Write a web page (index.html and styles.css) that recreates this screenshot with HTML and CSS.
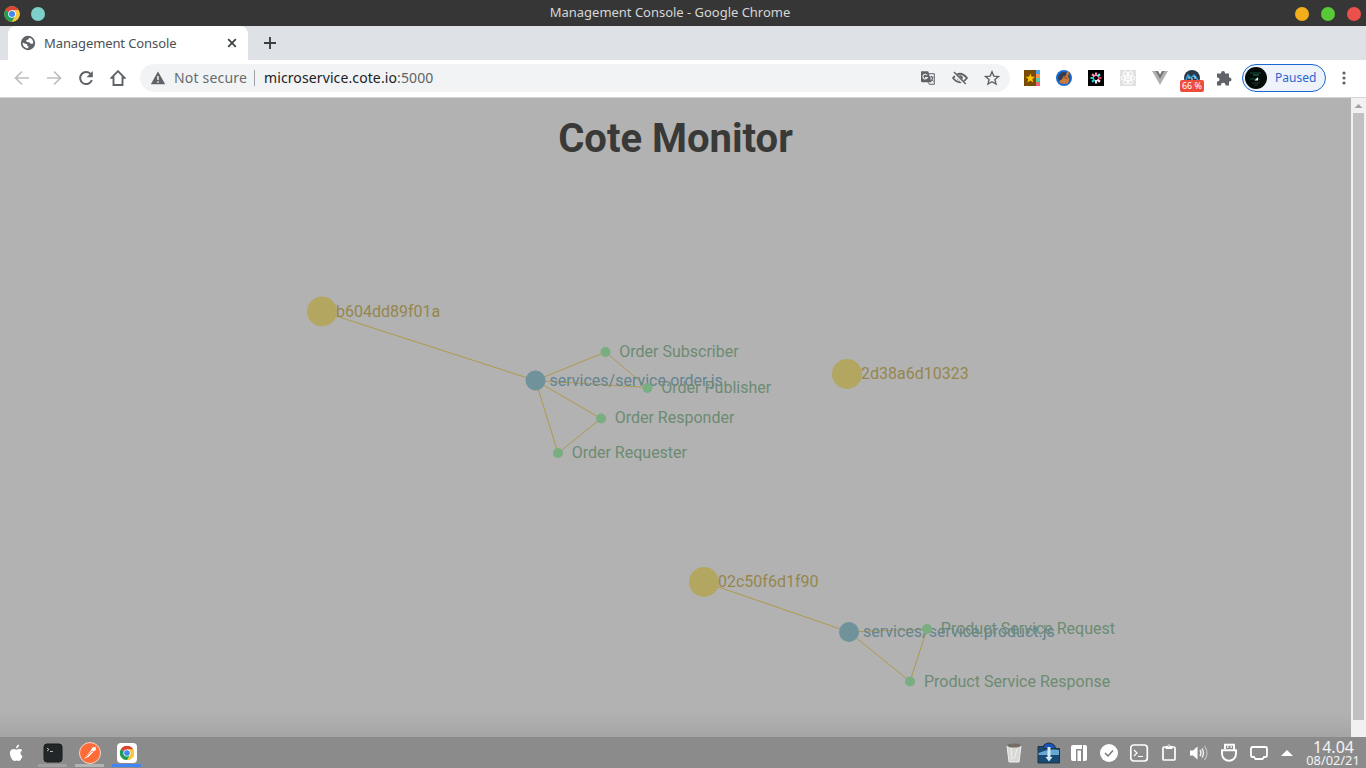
FILE: index.html
```html
<!DOCTYPE html>
<html lang="en">
<head>
<meta charset="utf-8">
<title>Management Console</title>
<link rel="stylesheet" href="styles.css">
</head>
<body>
<svg width="0" height="0" class="defs">
  <symbol id="chrome" viewBox="0 0 48 48">
    <circle cx="24" cy="24" r="23" fill="#fbc83c"/>
    <path d="M24 24L4 12.500A23 23 0 0 1 44 12.500H24z" fill="#db4437"/>
    <path d="M4 12.500A23 23 0 0 0 24 47L34 30L24 24z" fill="#1f9d58"/>
    <path d="M24 12.500H44A23 23 0 0 1 24 47L34 30z" fill="#fbc83c"/>
    <circle cx="24" cy="24" r="11.500" fill="#fff"/>
    <circle cx="24" cy="24" r="9" fill="#4285f4"/>
  </symbol>
</svg>

<header class="titlebar">
  <div class="title-left"><svg width="16" height="16"><use href="#chrome"/></svg><i class="dot teal"></i></div>
  <span class="window-title">Management Console - Google Chrome</span>
  <div class="title-right"><i class="dot amber"></i><i class="dot green"></i><i class="dot red"></i></div>
</header>

<nav class="tabstrip">
  <div class="tab">
    <svg class="favicon" width="16" height="16" viewBox="0 0 16 16"><circle cx="8" cy="8" r="7.200" fill="#5f6368"/><path d="M9.300 2.700L8.200 4.600L6.200 5.200L6.600 7.100L9.400 7.300L10.500 8.800L13.200 8.400A5.500 5.500 0 0 0 9.300 2.700zM2.600 7.500L5.300 8.800L7.200 9.300L7.300 11L8.800 11.600L7.600 13.500A5.600 5.600 0 0 1 2.600 7.500z" fill="#fff"/></svg>
    <span class="tab-title">Management Console</span>
    <svg class="close" width="16" height="16" viewBox="0 0 16 16"><path d="M4.200 4.200l7.600 7.600M11.800 4.200l-7.600 7.600" stroke="#3c4043" stroke-width="1.700"/></svg>
  </div>
  <svg class="newtab" width="16" height="16" viewBox="0 0 16 16"><path d="M8 2v12M2 8h12" stroke="#3c4043" stroke-width="1.900"/></svg>
</nav>

<div class="toolbar">
  <div class="nav-buttons">
    <svg viewBox="0 0 16 16"><path d="M15 8H2M8 1.500L1.500 8L8 14.500" fill="none" stroke="#bbbdc0" stroke-width="1.700"/></svg>
    <svg viewBox="0 0 16 16"><path d="M1 8h13M8 1.500L14.500 8L8 14.500" fill="none" stroke="#bbbdc0" stroke-width="1.700"/></svg>
    <svg viewBox="0 0 16 16"><path d="M13 4.600A6 6 0 1 0 13.800 10" fill="none" stroke="#5f6368" stroke-width="2"/><path d="M14.800 1v6.300H8.500z" fill="#5f6368"/></svg>
    <svg viewBox="0 0 16 16"><path d="M8 1.200L1.500 7.800H3.500V15H12.500V7.800H14.500z" fill="none" stroke="#5f6368" stroke-width="1.900"/></svg>
  </div>
  <div class="omnibox">
    <svg width="16" height="16" viewBox="0 0 16 16"><path d="M8 1.500L15.200 14.300H.8z" fill="#5f6368"/><path d="M8 6v4M8 11.200v1.600" stroke="#f1f3f4" stroke-width="1.500"/></svg>
    <span class="insecure">Not secure</span><i class="divider"></i><span class="url">microservice.cote.io<span class="port">:5000</span></span>
    <div class="omni-icons">
      <svg viewBox="0 0 16 16"><path d="M1 1.200h7.200l3.300 11H2.200Q1 12.200 1 11z" fill="#5f6368"/><path d="M8.500 3.700h5.800v10.600H9.400L8 12.200" fill="none" stroke="#5f6368" stroke-width="1"/><path d="M7.100 5.300A2.300 2.300 0 1 0 7.300 7.500H5" fill="none" stroke="#f1f3f4" stroke-width="1.100"/><path d="M10 7h3.500M11.500 6v1M13 7q-.6 3-2 4.500M11 8.500l2.500 3" stroke="#5f6368" fill="none"/></svg>
      <svg viewBox="0 0 16 16"><path d="M1 8Q8-.5 15 8Q8 16.500 1 8z" fill="none" stroke="#5f6368" stroke-width="1.800"/><circle cx="8" cy="8" r="2.800" fill="#5f6368"/><path d="M1.600 2.800l11.600 11.700" stroke="#f1f3f4" stroke-width="3"/><path d="M2 2l11.800 12" stroke="#5f6368" stroke-width="1.500"/></svg>
      <svg viewBox="0 0 16 16"><path d="M8 1.800l1.800 4.300 4.700.4-3.600 3 1.100 4.600L8 11.700 4 14.100l1.100-4.600-3.600-3 4.700-.4z" fill="none" stroke="#5f6368" stroke-width="1.400"/></svg>
    </div>
  </div>
  <div class="extensions">
    <svg viewBox="0 0 16 16"><path d="M0 0h12v16H0z" fill="#794b05"/><path d="M12 0h4v4h-4z" fill="#4ba2eb"/><path d="M12 4h4v4h-4z" fill="#f98f55"/><path d="M12 8h4v4h-4z" fill="#4acca4"/><path d="M12 12h4v4h-4z" fill="#ed6573"/><path d="M6.300 3.500l1.200 3.200 3.600.1-2.800 2.200 1 3.400-3-2-3 2 1-3.400L1.500 6.800l3.600-.1z" fill="#ffc800"/></svg>
    <svg viewBox="0 0 16 16"><circle cx="8" cy="8" r="8" fill="#176bd2"/><circle cx="8" cy="8" r="6" fill="#343d4e"/><path d="M11.500 1l2 1-1.500 4.500 1.500 2-1.500 5Q5 15 3 11.300L6.200 9l1.200-3 2 .2z" fill="#c77a3c"/><path d="M7.200 7l4.500 1.500" stroke="#8a4d22"/></svg>
    <svg viewBox="0 0 16 16"><path d="M0 0h16v16H0z" fill="#000"/><g stroke-width="2.200"><path d="M8 2.500v3.500M4.100 4.100l2.500 2.500" stroke="#ff8dad"/><path d="M2.500 8H6M4.100 11.900l2.500-2.500" stroke="#25c9cf"/><path d="M8 13.500V10M11.900 11.900L9.400 9.400" stroke="#f3e7ef"/><path d="M13.500 8H10" stroke="#e83363"/><path d="M11.900 4.100L9.400 6.600" stroke="#63edf1"/></g></svg>
    <svg viewBox="0 0 16 16"><path d="M0 0h16v16H0z" fill="#e1e1e1"/><g fill="none" stroke="#fff" stroke-width="1"><ellipse cx="8" cy="8" rx="7" ry="2.600"/><ellipse cx="8" cy="8" rx="7" ry="2.600" transform="rotate(60 8 8)"/><ellipse cx="8" cy="8" rx="7" ry="2.600" transform="rotate(120 8 8)"/></g><circle cx="8" cy="8" r="1.400" fill="#fff"/></svg>
    <svg viewBox="0 0 16 16"><path d="M0 1h4l4 7 4-7h4L8 15z" fill="#b1b1b1"/><path d="M3.500 1H6l2 3.500L10 1h2.500L8 9z" fill="#777"/></svg>
    <div class="badged"><svg viewBox="0 0 16 16"><circle cx="8" cy="8" r="8" fill="#2b3a4b"/><path d="M2 10l2-5 3 3 3-3 4 5" stroke="#37a7e4" fill="none" stroke-width="1.400"/><path d="M5 7v2M11 6v3M8 8v2" stroke="#e8edf1" stroke-width="1"/></svg><span class="badge">66 %</span></div>
    <svg viewBox="0 0 16 16"><path d="M1 3.500h4V3a2 2 0 0 1 4 0v.500h4v4h.500a2 2 0 0 1 0 4H13v4H9.500V15a2 2 0 0 0-4.500 0v.500H1V11.500h.500a2 2 0 0 0 0-4H1z" fill="#5f6368"/></svg>
  </div>
  <div class="profile"><svg width="22" height="22" viewBox="0 0 22 22"><circle cx="11" cy="11" r="11" fill="#020b08"/><path d="M5 6h11M5 12h10" stroke="#0c3b29" stroke-width="1.500"/><path d="M8 8h6" stroke="#26795a"/><path d="M9.500 13.500l3.500-3.500v3.500z" fill="#eef"/><path d="M7 16h8M9 18h4" stroke="#26382f"/></svg><span>Paused</span></div>
  <svg class="menu" width="16" height="16" viewBox="0 0 16 16"><g fill="#5f6368"><circle cx="8" cy="3" r="1.600"/><circle cx="8" cy="8" r="1.600"/><circle cx="8" cy="13" r="1.600"/></g></svg>
</div>

<div class="viewport">
  <main class="page">
    <h1>Cote Monitor</h1>
    <svg class="graph" viewBox="0 98 1351 639">
      <g class="links">
        <path d="M322 311.500L535.500 380.500L605.500 352L647.500 387.500L535.500 380.500L601 418.500L558 453L535.500 380.500"/>
        <path d="M704 582L849 632L927 629L910 681.500L849 632"/>
      </g>
      <g class="host"><circle cx="322" cy="311.500" r="15"/><text x="336" y="317">b604dd89f01a</text><circle cx="847" cy="374" r="15"/><text x="861" y="379">2d38a6d10323</text><circle cx="704" cy="582" r="15"/><text x="718" y="587">02c50f6d1f90</text></g>
      <g class="process"><circle cx="535.500" cy="380.500" r="10"/><text x="549.500" y="386">services/service.order.js</text><circle cx="849" cy="632" r="10"/><text x="863" y="637">services/service.product.js</text></g>
      <g class="service">
        <circle cx="605.500" cy="352" r="5"/><text x="619.300" y="357">Order Subscriber</text>
        <circle cx="647.500" cy="388" r="5"/><text x="661.300" y="393">Order Publisher</text>
        <circle cx="601" cy="418.500" r="5"/><text x="614.700" y="423">Order Responder</text>
        <circle cx="558" cy="453" r="5"/><text x="571.700" y="458">Order Requester</text>
        <circle cx="927" cy="629" r="5"/><text x="940.800" y="634">Product Service Request</text>
        <circle cx="910" cy="681.500" r="5"/><text x="924" y="687">Product Service Response</text>
      </g>
    </svg>
  </main>
  <aside class="scrollbar"><svg width="15" height="15" viewBox="0 0 15 15"><path d="M3.500 10L7.500 6l4 4z" fill="#a3a3a3"/></svg><i class="thumb"></i></aside>
</div>

<footer class="taskbar">
  <div class="apps">
    <div class="app"><svg width="20" height="24" viewBox="0 0 20 24"><path d="M10.500 8.700Q12.500 7.500 14.400 8.100Q15.700 8.400 16.200 9.400Q12.500 12 16.500 15.300Q14.700 20 12.800 20Q10.500 19 8.500 20Q6.700 20.300 5 16.500Q2.500 10 5.800 8.500Q7.800 7.400 10.500 8.700zM10 7.500Q10 4.500 13 3.600Q13.200 6.500 10 7.500z" fill="#fff"/></svg></div>
    <div class="app running first"><svg width="20" height="20" viewBox="0 0 20 20"><rect x="1" y="1" width="18" height="18" rx="3" fill="#222628" stroke="#171a1b"/><path d="M4 5l2 1.500L4 8M7 8.500h3" stroke="#ddd" fill="none" stroke-width=".8"/></svg></div>
    <div class="app running"><svg width="24" height="24" viewBox="0 0 24 24"><circle cx="12" cy="12" r="10.500" fill="#ff6c37" stroke="#f2d5ca" stroke-width="1"/><path d="M6 18l6.500-8 2-3.500 3-.8.500 3-2.500 2-5 5z" fill="#fff"/><path d="M8 16l6-6 2 1" stroke="#ff6c37" stroke-width=".7" fill="none"/></svg></div>
    <div class="app running active"><svg width="20" height="20" viewBox="0 0 20 20"><rect width="20" height="20" rx="4" fill="#fff"/><svg x="2.500" y="2.500" width="15" height="15"><use href="#chrome"/></svg></svg></div>
  </div>
  <div class="tray">
    <svg class="wide" viewBox="0 0 24 24"><path d="M5 4h14l-2 17H7z" fill="#d8d8d5"/><ellipse cx="12" cy="4.500" rx="7" ry="2" fill="#6b7069"/><path d="M5 5l2 16h10l2-16M9 7l1 12M15 8l-3 10" stroke="#f0f0ed" fill="none"/><path d="M9 4h2M14 5h2" stroke="#b45b46"/></svg>
    <svg class="wide folder" viewBox="0 0 24 24"><circle cx="13" cy="9" r="7" fill="#1954bc" stroke="#222e3d"/><path d="M2 5.500h5l1 2h15.500v14.500H2z" fill="#174a75" stroke="#26323c"/><path d="M2.500 12q10-5 20.500-3v5H2.500z" fill="#67a9d2"/><path d="M11.500 6h3v10h2l-3.500 4.500L9.500 16h2z" fill="#d4ebf6"/></svg>
    <svg viewBox="0 0 20 20"><path d="M4 2h9v4H7v12H4Q2 18 2 16V4Q2 2 4 2zM8.500 7.500H12V18H8.500zM14 2h2q2 0 2 2v12q0 2-2 2h-2z" fill="#fff"/></svg>
    <svg viewBox="0 0 20 20"><circle cx="10" cy="10" r="9" fill="#fff"/><path d="M6 10l3 3 5-5.500" fill="none" stroke="#777" stroke-width="1.500"/></svg>
    <svg viewBox="0 0 20 20"><rect x="1.800" y="2" width="16.500" height="16" rx="3" fill="none" stroke="#fff" stroke-width="1.700"/><path d="M5 7l3 3-3 3M9 13.500h5" fill="none" stroke="#fff" stroke-width="1.200"/></svg>
    <svg viewBox="0 0 20 20"><path d="M7 4H5Q4 4 4 5v11q0 1 1 1h10q1 0 1-1V5q0-1-1-1h-2" fill="none" stroke="#fff" stroke-width="1.700"/><path d="M6.500 3h2a1.500 1.500 0 0 1 3 0h2v3h-7z" fill="#fff"/><circle cx="10" cy="3" r=".8" fill="#888"/></svg>
    <svg viewBox="0 0 20 20"><path d="M1 7.500h3l4.500-4v13l-4.500-4H1z" fill="#fff"/><path d="M11 7q2 3 0 6M13 5.500q3 4.500 0 9" fill="none" stroke="#eee" stroke-width="1.400"/><path d="M15.500 3q5 7 0 14" fill="none" stroke="#bdbdbd" stroke-width="1.300"/></svg>
    <svg viewBox="0 0 20 20"><path d="M6 6V1.800h9V7M3 7.300h14v3.500a7 7 0 0 1-14 0z" fill="none" stroke="#fff" stroke-width="1.900"/><path d="M8 4h1.500M11.500 4H13" stroke="#fff" stroke-width="1.500"/></svg>
    <svg viewBox="0 0 20 20"><path d="M3.500 4h13q1.500 0 1.500 1.500v7q0 1.500-1.500 1.500H15l-1.500 2h-7L5 14H3.500Q2 14 2 12.500v-7Q2 4 3.500 4z" fill="none" stroke="#fff" stroke-width="1.800"/></svg>
    <svg class="arrow" viewBox="0 0 20 20"><path d="M4 13l6-6 6 6z" fill="#fff"/></svg>
  </div>
  <div class="clock"><span class="time">14.04</span><span class="date">08/02/21</span></div>
</footer>
</body>
</html>
```

FILE: styles.css
```css
* { box-sizing: border-box; }
body { margin: 0; width: 1366px; height: 768px; overflow: hidden; display: flex; flex-direction: column; font-family: "Noto Sans", sans-serif; }
svg { display: block; flex: none; }
.defs { display: none; }
.titlebar { height: 26px; background: #363636; display: grid; grid-template-columns: 120px 1fr 120px; align-items: center; flex: none; }
.title-left, .title-right { display: flex; align-items: center; padding-top: 2px; }
.title-left { padding-left: 4px; gap: 11px; }
.title-right { justify-content: flex-end; padding-right: 5px; gap: 12px; }
.dot { width: 14px; height: 14px; border-radius: 50%; }
.teal { background: #7ed0ca; }
.amber { background: #f3ae1b; }
.green { background: #58c837; }
.red { background: #eb514a; }
.window-title { text-align: center; color: #d6d6d6; font-size: 13px; line-height: 24px; padding: 0 26px 2px 0; letter-spacing: -0.02px; }
.tabstrip { height: 34px; background: #dee1e6; flex: none; display: flex; align-items: flex-end; padding-left: 8px; }
.tab { width: 240px; height: 34px; background: #fff; border-radius: 8px 8px 0 0; display: flex; align-items: center; padding: 0 8px 0 12px; }
.tab-title { font-size: 13px; color: #4c5053; margin-left: 8px; flex: 1; letter-spacing: -0.1px; }
.newtab { margin: 0 0 9px 14px; }
.toolbar { height: 38px; flex: none; background: #fff; border-bottom: 1px solid #d3d3d3; display: flex; align-items: center; padding: 0 14px 1px; }
.nav-buttons { display: flex; gap: 16px; margin-right: 14px; }
.nav-buttons svg, .omni-icons svg, .extensions svg { width: 16px; height: 16px; }
.omnibox { width: 870px; height: 28px; border-radius: 14px; background: #f1f3f4; display: flex; align-items: center; padding: 0 10px; font-size: 14px; }
.insecure { color: #676b70; margin-left: 8px; width: 73px; letter-spacing: 0.18px; white-space: nowrap; padding-bottom: 2px; }
.divider { width: 1px; height: 16px; background: #9fa2a5; margin: 0 9px 0 7px; }
.url { color: #202124; letter-spacing: 0.11px; padding-bottom: 2px; }
.port { color: #5f6368; }
.omni-icons { display: flex; gap: 16px; margin-left: auto; }
.extensions { display: flex; gap: 16px; margin-left: 14px; }
.badged { position: relative; }
.badge { position: absolute; left: -4px; top: 10px; width: 24px; height: 12px; border-radius: 2px; background: #ee4c3d; color: #fff; font-size: 9px; line-height: 12px; text-align: center; white-space: nowrap; }
.profile { width: 84px; height: 28px; border: 1px solid #1967d2; border-radius: 14px; background: #edf2fb; display: flex; align-items: center; gap: 8px; padding-left: 2px; margin-left: 10px; font-size: 12px; color: #2a67d2; }
.profile span { padding-bottom: 1px; }
.menu { margin-left: 10px; }
.viewport { height: 639px; flex: none; display: flex; }
.page { width: 1351px; background: linear-gradient(#b2b2b2 0, #b2b2b2 614px, #a5a5a5 639px); display: grid; font-family: Roboto, sans-serif; }
.page h1, .graph { grid-area: 1 / 1; }
.page h1 { margin: 0; padding-top: 17px; font-size: 40px; font-weight: 700; line-height: 48px; color: #393937; text-align: center; }
.graph { width: 1351px; height: 639px; font-size: 16px; }
.links path { fill: none; stroke: #ae9a4d; stroke-width: 1; }
.host circle { fill: #b2a661; }
.host text { fill: #95864e; }
.process circle { fill: #6f929b; }
.process text { fill: #65848f; }
.service circle { fill: #78ae80; }
.service text { fill: #6d8b73; }
.scrollbar { width: 15px; background: #f1f1f1; display: flex; flex-direction: column; align-items: center; }
.thumb { width: 11px; height: 607px; background: #c1c1c1; }
.taskbar { height: 31px; flex: none; background: #8b8b8b; display: flex; }
.apps { display: flex; }
.app { width: 37px; height: 31px; display: flex; align-items: center; justify-content: center; }
.app:first-child { width: 34px; padding-right: 3px; }
.running { background: linear-gradient(#b3b3b3, #b3b3b3) 4px 27px / 29px 3px no-repeat; }
.first { background-image: linear-gradient(#a0a0a0, #a0a0a0); }
.active { background-image: linear-gradient(#4285f4, #4285f4); }
.tray { margin-left: auto; display: flex; align-items: center; gap: 10px; }
.tray svg { width: 20px; height: 20px; }
.tray svg.wide { width: 24px; height: 24px; }
.tray .folder { margin-right: -1px; }
.tray .arrow { margin-left: -2px; }
.clock { width: 66px; margin-left: 3px; color: #f4f4f4; display: flex; flex-direction: column; align-items: center; }
.time { font-size: 16px; line-height: 18px; padding: 1px 0 0 1px; }
.date { font-size: 12.8px; line-height: 8px; }
```
